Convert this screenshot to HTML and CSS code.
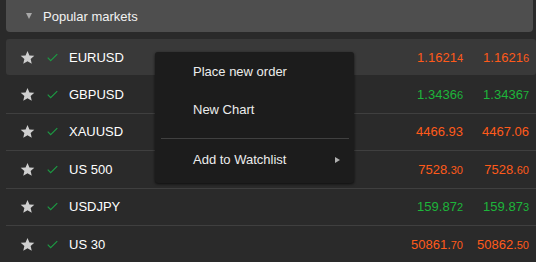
FILE: index.html
```html
<!DOCTYPE html>
<html>
<head>
<meta charset="utf-8">
<link rel="stylesheet" href="styles.css">
</head>
<body>
<div class="panel">
  <div class="header"><span class="caret"></span><span class="title">Popular markets</span></div>
  <div class="rows">
    <div class="row active">
      <svg class="star" viewBox="0 0 24 24"><path d="M12 1.5l3.1 7.2 7.8.6-5.9 5.1 1.8 7.6L12 18l-6.8 4 1.8-7.6-5.9-5.1 7.8-.6z"/></svg>
      <svg class="check" viewBox="0 0 12 9"><path d="M0.8 4.6l3.2 3.4 7.2-7.2"/></svg>
      <span class="sym">EURUSD</span>
      <span class="price down">1.1621<small>4</small></span>
      <span class="price down">1.1621<small>6</small></span>
    </div>
    <div class="row">
      <svg class="star" viewBox="0 0 24 24"><path d="M12 1.5l3.1 7.2 7.8.6-5.9 5.1 1.8 7.6L12 18l-6.8 4 1.8-7.6-5.9-5.1 7.8-.6z"/></svg>
      <svg class="check" viewBox="0 0 12 9"><path d="M0.8 4.6l3.2 3.4 7.2-7.2"/></svg>
      <span class="sym">GBPUSD</span>
      <span class="price up">1.3436<small>6</small></span>
      <span class="price up">1.3436<small>7</small></span>
    </div>
    <div class="row">
      <svg class="star" viewBox="0 0 24 24"><path d="M12 1.5l3.1 7.2 7.8.6-5.9 5.1 1.8 7.6L12 18l-6.8 4 1.8-7.6-5.9-5.1 7.8-.6z"/></svg>
      <svg class="check" viewBox="0 0 12 9"><path d="M0.8 4.6l3.2 3.4 7.2-7.2"/></svg>
      <span class="sym">XAUUSD</span>
      <span class="price down">4466.93</span>
      <span class="price down">4467.06</span>
    </div>
    <div class="row">
      <svg class="star" viewBox="0 0 24 24"><path d="M12 1.5l3.1 7.2 7.8.6-5.9 5.1 1.8 7.6L12 18l-6.8 4 1.8-7.6-5.9-5.1 7.8-.6z"/></svg>
      <svg class="check" viewBox="0 0 12 9"><path d="M0.8 4.6l3.2 3.4 7.2-7.2"/></svg>
      <span class="sym">US 500</span>
      <span class="price down">7528.<small>30</small></span>
      <span class="price down">7528.<small>60</small></span>
    </div>
    <div class="row">
      <svg class="star" viewBox="0 0 24 24"><path d="M12 1.5l3.1 7.2 7.8.6-5.9 5.1 1.8 7.6L12 18l-6.8 4 1.8-7.6-5.9-5.1 7.8-.6z"/></svg>
      <svg class="check" viewBox="0 0 12 9"><path d="M0.8 4.6l3.2 3.4 7.2-7.2"/></svg>
      <span class="sym">USDJPY</span>
      <span class="price up">159.87<small>2</small></span>
      <span class="price up">159.87<small>3</small></span>
    </div>
    <div class="row">
      <svg class="star" viewBox="0 0 24 24"><path d="M12 1.5l3.1 7.2 7.8.6-5.9 5.1 1.8 7.6L12 18l-6.8 4 1.8-7.6-5.9-5.1 7.8-.6z"/></svg>
      <svg class="check" viewBox="0 0 12 9"><path d="M0.8 4.6l3.2 3.4 7.2-7.2"/></svg>
      <span class="sym">US 30</span>
      <span class="price down">50861.<small>70</small></span>
      <span class="price down">50862.<small>50</small></span>
    </div>
  </div>
  <div class="menu">
    <div class="item">Place new order</div>
    <div class="item">New Chart</div>
    <div class="sep"></div>
    <div class="item sub">Add to Watchlist<span class="arrow"></span></div>
  </div>
</div>
</body>
</html>
```
FILE: styles.css
```css
html, body {
  margin: 0;
  padding: 0;
  background: #2a2a2a;
  height: 262px;
  overflow: hidden;
}
body {
  font-family: "Liberation Sans", Arial, sans-serif;
  font-size: 13px;
  color: #ffffff;
}
.panel {
  position: relative;
  display: flow-root;
  padding-left: 6px;
}
.header {
  margin-top: -4px;
  margin-right: 3px;
  height: 36px;
  box-sizing: border-box;
  padding-top: 4px;
  background: #4e4e4e;
  border-radius: 4px;
  display: flex;
  align-items: center;
}
.caret {
  width: 0;
  height: 0;
  border-left: 3.5px solid transparent;
  border-right: 3.5px solid transparent;
  border-top: 6px solid #a8a8a8;
  margin-left: 20px;
  margin-right: 11px;
}
.title {
  color: #f2f2f2;
}
.rows {
  margin-top: 7px;
}
.row {
  display: flex;
  align-items: center;
  height: 36.4px;
  border-bottom: 1px solid #3f3f3f;
}
.row:last-child {
  border-bottom: none;
}
.row.active {
  background: #393939;
  border-radius: 3px;
  border-bottom: none;
  height: 36.4px;
  margin-bottom: 1px;
}
.star {
  width: 15px;
  height: 15px;
  margin-left: 14px;
  fill: #cfcfcf;
  flex: none;
}
.check {
  width: 11px;
  height: 9px;
  margin-left: 12px;
  fill: none;
  stroke: #1c9a43;
  stroke-width: 1.3;
  flex: none;
}
.sym {
  margin-left: 11px;
  flex: 1;
  color: #ffffff;
}
.price {
  text-align: right;
  font-size: 13px;
}
.price small {
  font-size: 11px;
}
.price:nth-of-type(2) {
  width: 100px;
}
.price:nth-of-type(3) {
  width: 66px;
  margin-right: 7px;
}
.down { color: #ff5a1a; }
.up { color: #1db53a; }
.menu {
  position: absolute;
  left: 155px;
  top: 52px;
  width: 199px;
  height: 131px;
  box-sizing: border-box;
  background: #1c1c1c;
  border-radius: 3px;
  box-shadow: 0 1px 3px rgba(0,0,0,0.7);
  padding-top: 1px;
}
.item {
  height: 38px;
  line-height: 38px;
  padding-left: 38px;
  color: #ececec;
  position: relative;
}
.sep {
  height: 1px;
  background: #404040;
  margin: 9px 5px 1px 6px;
}
.item.sub {
  height: 40px;
  line-height: 40px;
}
.arrow {
  position: absolute;
  left: 180px;
  top: 17px;
  width: 0;
  height: 0;
  border-top: 3px solid transparent;
  border-bottom: 3px solid transparent;
  border-left: 5px solid #b0b0b0;
}
```
